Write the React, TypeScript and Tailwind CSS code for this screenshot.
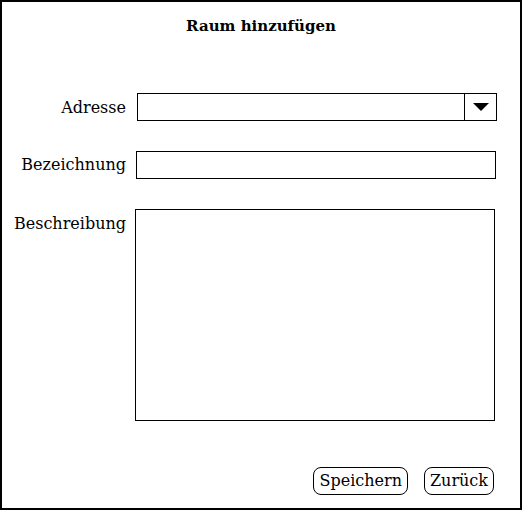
import React from 'react'

export default function App() {
    return (
        <div className="w-[522px] h-[510px] border-2 border-black bg-white flex flex-col text-black"
            style={{ fontFamily: '"DejaVu Serif", "Liberation Serif", serif' }}>

            {/* title */}
            <h1 className="text-[15px] font-bold text-center mt-[14px] leading-[20px]">
                Raum hinzufügen
            </h1>

            {/* form */}
            <div className="flex flex-col mt-[57px] gap-[30px]">
                <div className="flex items-center h-[28px]">
                    <label className="w-[124px] text-right text-[16px] pt-[2px]">Adresse</label>
                    <div className="ml-[11px] w-[360px] h-[28px] border border-black flex">
                        <div className="flex-1"></div>
                        <div className="w-[32px] border-l border-black flex items-center justify-center">
                            <svg width="16" height="9" viewBox="0 0 16 9">
                                <polygon points="0,0 16,0 8,8" fill="black" />
                            </svg>
                        </div>
                    </div>
                </div>

                <div className="flex items-center h-[28px]">
                    <label className="w-[124px] text-right text-[16px]">Bezeichnung</label>
                    <input className="ml-[10px] w-[360px] h-[28px] border border-black outline-none" />
                </div>

                <div className="flex items-start">
                    <label className="w-[124px] text-right text-[16px] pt-[3px]">Beschreibung</label>
                    <textarea className="ml-[9px] w-[360px] h-[212px] border border-black resize-none outline-none" />
                </div>
            </div>

            {/* buttons */}
            <div className="mt-auto mb-[13px] flex justify-end gap-[16px] pr-[26px]">
                <button className="h-[28px] px-[5px] border border-black rounded-[8px] text-[16px] leading-none">
                    Speichern
                </button>
                <button className="h-[28px] px-[5px] border border-black rounded-[8px] text-[16px] leading-none">
                    Zurück
                </button>
            </div>
        </div>
    )
}
